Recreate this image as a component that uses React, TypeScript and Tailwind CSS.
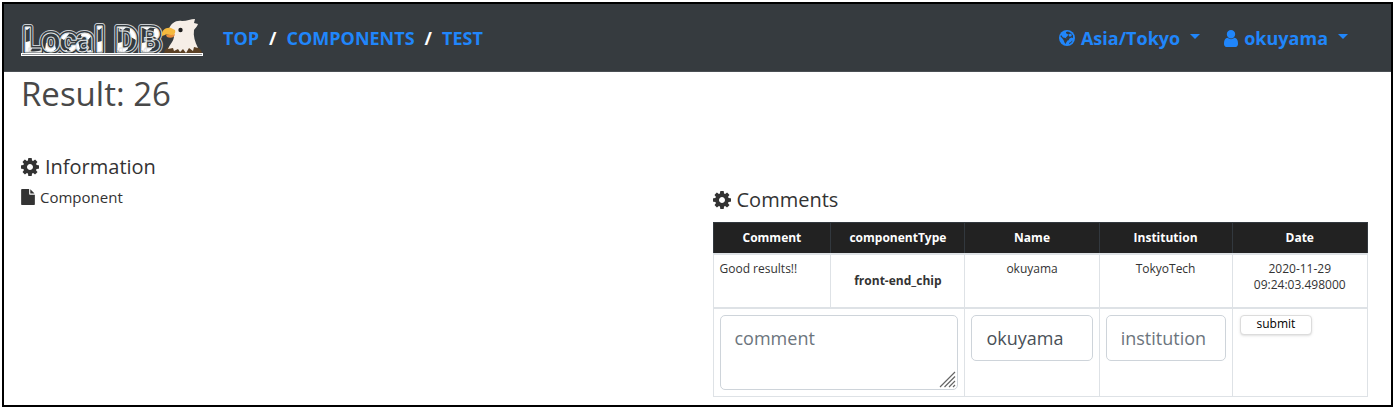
import type { ReactNode } from 'react';

function Icon({ viewBox, d, className, children }: { viewBox: string; d: string; className: string; children?: ReactNode }) {
  return (
    <svg viewBox={viewBox} className={className} fill="currentColor" aria-hidden="true">
      <path d={d} />
      {children}
    </svg>
  );
}

function Gear() {
  return (
    <Icon
      viewBox="128 128 1536 1536"
      className="size-[18px] shrink-0"
      d="M1152 896q0-106-75-181t-181-75-181 75-75 181 75 181 181 75 181-75 75-181zm512-109v222q0 12-8 23t-20 13l-185 28q-19 54-39 91 35 50 107 138 10 12 10 25t-9 23q-27 37-99 108t-94 71q-12 0-26-9l-138-108q-44 23-91 38-16 136-29 186-7 28-36 28h-222q-14 0-24.5-8.5t-11.5-21.5l-28-184q-49-16-90-37l-141 107q-10 9-25 9-14 0-25-11-126-114-165-168-7-10-7-23 0-12 8-23 15-21 51-66.5t54-70.5q-27-50-41-99l-183-27q-13-2-21-12.5t-8-23.5v-222q0-12 8-23t19-13l186-28q14-46 39-92-40-57-107-138-10-12-10-24 0-10 9-23 26-36 98.5-107.5t94.5-71.5q13 0 26 10l138 107q44-23 91-38 16-136 29-186 7-28 36-28h222q14 0 24.5 8.5t11.5 21.5l28 184q49 16 90 37l142-107q9-9 24-9 13 0 25 10 129 119 165 170 7 8 7 22 0 12-8 23-15 21-51 66.5t-54 70.5q26 50 41 98l183 28q13 2 21 12.5t8 23.5z"
    />
  );
}

function FileIcon() {
  return (
    <Icon
      viewBox="0 0 1536 1792"
      className="h-4 w-[14px] shrink-0"
      d="M1024 512v-472q22 14 36 28l408 408q14 14 28 36h-472zm-128 32q0 40 28 68t68 28h544v1056q0 40-28 68t-68 28h-1344q-40 0-68-28t-28-68v-1600q0-40 28-68t68-28h800v544z"
    />
  );
}

function UserIcon() {
  return (
    <Icon
      viewBox="0 128 1280 1536"
      className="h-[17px] w-[14px] shrink-0"
      d="M1280 1399q0 109-62.5 187t-150.5 78h-854q-88 0-150.5-78t-62.5-187q0-85 8.5-160.5t31.5-152 58.5-131 94-89 134.5-34.5q131 128 313 128t313-128q76 0 134.5 34.5t94 89 58.5 131 31.5 152 8.5 160.5zm-256-887q0 159-112.5 271.5t-271.5 112.5-271.5-112.5-112.5-271.5 112.5-271.5 271.5-112.5 271.5 112.5 112.5 271.5z"
    />
  );
}

function GlobeIcon() {
  return (
    <Icon viewBox="0 0 32 32" className="size-4 shrink-0" d="M16 0a16 16 0 1 0 0 32a16 16 0 0 0 0-32z">
      <g fill="#343a3f">
        <path d="M14 4l4-1 6 3 4 5 0 5-3-1-4 2-2 4-4-2-1-4 3-3 2-3-3-1-2-2z" />
        <path d="M4 10l4 5 5 1 5 4-3 4-2 4-2-3-2-5-3-4-3-3z" />
        <path d="M20 26l4-2 2-3 1 1-3 4-4 2z" />
      </g>
      <path d="M19 9l4-2 3 3-2 3-4 0z" />
    </Icon>
  );
}

function Caret() {
  return (
    <svg viewBox="0 0 10 5" className="mb-1 h-[5px] w-[10px]" fill="currentColor" aria-hidden="true">
      <path d="M0 0h10L5 5z" />
    </svg>
  );
}

function Logo() {
  const word = (
    <text x="2 20 38 54 74 88 94 118" y="34">
      Local DB
    </text>
  );
  return (
    <svg viewBox="0 0 182 38" className="h-[38px] w-[182px] overflow-visible" role="img" aria-label="Local DB">
      <defs>
        <pattern id="patches" width="24" height="23" patternUnits="userSpaceOnUse">
          <rect width="24" height="23" fill="#343a3f" />
          <path d="M1 2l8-2 2 8-5 4-6-3zM13 11l9-2 2 7-5 6-7-4z" fill="#fff" />
        </pattern>
      </defs>
      <g fontFamily='Roboto, "Liberation Sans", sans-serif' fontWeight="700" fontSize="35" strokeLinejoin="round">
        <g fill="#c9cccf" stroke="#c9cccf" strokeWidth="6">{word}</g>
        <g fill="#343a3f" stroke="#343a3f" strokeWidth="4">{word}</g>
        <g fill="url(#patches)" stroke="#dfe1e2" strokeWidth="1">{word}</g>
      </g>
      <path d="M143 35c1-4 3-6 7-7h23c4 1 7 3 8 7z" fill="#5b4024" />
      <path
        d="M148 11c2-6 7-9 13-8c5 0 9-2 13-2l-1 4 4 1c-1 3-3 4-4 6c-1 6 1 12 4 18l-4-1-1 4-4-3-3 5-3-4-3 3-2-3-4 2-1-3-5 1c2-5 6-8 6-13z"
        fill="#f6eee7"
      />
      <path d="M141 18c-1-6 4-9 9-8l4 2c1 3-1 6-5 5c-2 0-4-1-5 0c-1 0-2 1-3 1z" fill="#f5b93f" />
      <path d="M145 17c3-1 5 1 9-1c0 3-4 5-8 3z" fill="#e98c3b" />
      <circle cx="159.5" cy="12" r="2.2" fill="#1f1d1d" />
      <rect x="0.5" y="35.5" width="181" height="2" fill="#8a8d90" stroke="#fff" strokeWidth="1" />
    </svg>
  );
}

const columns = ['Comment', 'componentType', 'Name', 'Institution', 'Date'];
const cell = 'border border-[#dee2e6] px-[6px] py-[6px] align-top';
const field =
  'block w-full rounded-[5px] border border-[#ced4da] bg-white px-[14px] text-[18px] leading-7 text-[#495057] placeholder:text-[#6c757d]';

export default function App() {
  return (
    <div className="bg-white pt-[2px] pr-[2px] pb-2 pl-[2px] font-['Open_Sans','Noto_Sans',sans-serif] font-medium text-[#333]">
      <div className="border-2 border-black pb-2">
        <header className="flex items-center justify-between border-b border-[#4a4f54] bg-[#363b3f] pr-[43px] pl-[17px] pt-[14px] pb-[15px] text-[18px] font-bold text-[#2086fb]">
          <div className="flex items-center">
            <a href="#" aria-label="Local DB">
              <Logo />
            </a>
            <nav aria-label="Breadcrumb" className="ml-5 flex gap-[10px] pt-[3px]">
              <a href="#top">TOP</a>
              <span className="text-white">/</span>
              <a href="#components">COMPONENTS</a>
              <span className="text-white">/</span>
              <a href="#test">TEST</a>
            </nav>
          </div>
          <div className="flex gap-6 pt-[2px]">
            <button type="button" className="flex items-center gap-[6px]">
              <GlobeIcon />
              <span className="mr-1">Asia/Tokyo</span>
              <Caret />
            </button>
            <button type="button" className="flex items-center gap-[6px]">
              <UserIcon />
              <span className="mr-1">okuyama</span>
              <Caret />
            </button>
          </div>
        </header>
        <main className="pr-[23px] pl-[17px]">
          <h1 className="text-[33px] leading-[44px] text-[#484848]">Result: 26</h1>
          <div className="mt-9 grid grid-cols-2 gap-9">
            <section className="pt-[1px]">
              <h2 className="flex items-center gap-[6px] text-[20px] leading-7">
                <Gear />
                Information
              </h2>
              <p className="mt-1 flex items-center gap-[5px] text-[15px] leading-6">
                <FileIcon />
                Component
              </p>
            </section>
            <section className="pt-[34px]">
              <h2 className="mb-2 flex items-center gap-[6px] text-[20px] leading-7">
                <Gear />
                Comments
              </h2>
              <table className="w-full table-fixed border-collapse text-[12px] leading-4">
                <colgroup>
                  <col className="w-[18%]" />
                  <col className="w-[20.5%]" />
                  <col className="w-[20.5%]" />
                  <col className="w-[20.3%]" />
                  <col className="w-[20.7%]" />
                </colgroup>
                <thead className="bg-[#222] text-white">
                  <tr>
                    {columns.map((c) => (
                      <th key={c} scope="col" className="border border-b-2 border-[#32383e] border-b-[#dee2e6] py-[7px] text-center font-bold">
                        {c}
                      </th>
                    ))}
                  </tr>
                </thead>
                <tbody>
                  <tr className="h-[54px] border-b-2 border-[#dee2e6]">
                    <td className={cell}>Good results!!</td>
                    <th scope="row" className="border border-[#dee2e6] text-center align-middle font-bold">
                      front-end_chip
                    </th>
                    <td className={`${cell} text-center`}>okuyama</td>
                    <td className={`${cell} text-center`}>TokyoTech</td>
                    <td className={`${cell} text-center`}>
                      2020-11-29
                      <br />
                      09:24:03.498000
                    </td>
                  </tr>
                  <tr>
                    <td colSpan={2} className={cell}>
                      <div className="relative">
                        <textarea aria-label="Comment" placeholder="comment" className={`${field} h-[75px] resize-none py-[8px]`} />
                        <svg
                          viewBox="0 0 17 17"
                          className="pointer-events-none absolute right-[2px] bottom-[2px] size-[17px]"
                          fill="none"
                          stroke="#666"
                          strokeWidth="1.2"
                          aria-hidden="true"
                        >
                          <path d="M1 16L16 1M5.500 16L16 5.500M10 16l6-6M14 16l2-2" />
                        </svg>
                      </div>
                    </td>
                    <td className={cell}>
                      <input aria-label="Name" type="text" defaultValue="okuyama" className={`${field} py-[8px]`} />
                    </td>
                    <td className={cell}>
                      <input aria-label="Institution" type="text" placeholder="institution" className={`${field} py-[8px]`} />
                    </td>
                    <td className={cell}>
                      <button
                        type="button"
                        className="ml-[1px] block rounded-[4px] border border-[#dcdcdc] bg-white px-4 pb-[2px] text-black shadow-sm"
                      >
                        submit
                      </button>
                    </td>
                  </tr>
                </tbody>
              </table>
            </section>
          </div>
        </main>
      </div>
    </div>
  );
}
